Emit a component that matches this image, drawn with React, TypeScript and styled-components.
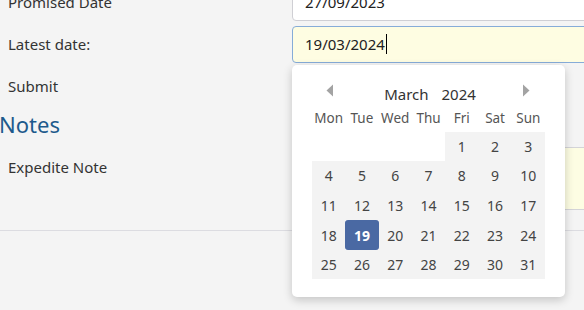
import React from 'react'
import styled, { createGlobalStyle } from 'styled-components'

const GlobalStyle = createGlobalStyle`
  html {
    overflow: hidden;
  }
  body {
    margin: 0;
    padding: 0;
    background: #f4f4f4;
    font-family: "Segoe UI", "Noto Sans", "Open Sans", sans-serif;
    color: #333;
  }
`

const weekDays = ['Mon', 'Tue', 'Wed', 'Thu', 'Fri', 'Sat', 'Sun']

// March 2024 starts on a Friday
const cells: (number | null)[] = [null, null, null, null, ...Array.from({ length: 31 }, (_, i) => i + 1)]

const App = () => {
  return (
    <>
      <GlobalStyle />
      <Page>
        <Row>
          <Label>Promised Date</Label>
          <Field>
            <Input>27/09/2023</Input>
          </Field>
        </Row>
        <Row>
          <Label>Latest date:</Label>
          <Field>
            <Input focused>
              19/03/2024<Caret />
            </Input>
            <Popup>
              <CalHeader>
                <Arrow>
                  <svg width="8" height="13" viewBox="0 0 8 13">
                    <path d="M7 0.5 L0.5 6.5 L7 12.5 Z" fill="#a3a3a3" />
                  </svg>
                </Arrow>
                <MonthTitle>
                  <span>March</span>
                  <span>2024</span>
                </MonthTitle>
                <Arrow>
                  <svg width="8" height="13" viewBox="0 0 8 13">
                    <path d="M1 0.5 L7.5 6.5 L1 12.5 Z" fill="#a3a3a3" />
                  </svg>
                </Arrow>
              </CalHeader>
              <DayGrid>
                {weekDays.map((d) => (
                  <WeekDay key={d}>{d}</WeekDay>
                ))}
                {cells.map((n, i) => (
                  <DayCell key={i} empty={n === null} selected={n === 19}>
                    {n}
                  </DayCell>
                ))}
              </DayGrid>
            </Popup>
          </Field>
        </Row>
        <Row>
          <Label>Submit</Label>
          <Field />
        </Row>
        <SectionTitle>Notes</SectionTitle>
        <Row top>
          <Label top>Expedite Note</Label>
          <Field>
            <NoteArea />
          </Field>
        </Row>
        <Divider />
      </Page>
    </>
  )
}

export default App

const Page = styled.div`
  margin-top: -19px;
  height: 329px;
  display: flex;
  flex-direction: column;
`

const Row = styled.div<{ top?: boolean }>`
  display: grid;
  grid-template-columns: 292px 1fr;
  align-items: ${(p) => (p.top ? 'start' : 'center')};
  min-height: 42px;
`

const Label = styled.div<{ top?: boolean }>`
  padding-left: 8px;
  padding-top: ${(p) => (p.top ? '16px' : '0')};
  font-size: 15px;
  color: #333;
`

const Field = styled.div`
  position: relative;
  min-height: 37px;
`

const Input = styled.div<{ focused?: boolean }>`
  box-sizing: border-box;
  height: 37px;
  margin-right: -8px;
  padding: 0 12px;
  display: flex;
  align-items: center;
  font-size: 15px;
  color: #222;
  background: ${(p) => (p.focused ? '#fefde2' : '#ffffff')};
  border: 1px solid ${(p) => (p.focused ? '#86acd8' : '#cfcfd4')};
  border-radius: 4px;
`

const Caret = styled.span`
  display: inline-block;
  width: 1px;
  height: 20px;
  background: #000;
  margin-left: 1px;
`

const Popup = styled.div`
  position: absolute;
  top: 39px;
  left: 0;
  z-index: 10;
  box-sizing: border-box;
  width: 273px;
  padding: 0 20px 18px;
  background: #fff;
  border-radius: 5px;
  box-shadow: 0 3px 10px rgba(0, 0, 0, 0.2);
`

const CalHeader = styled.div`
  display: flex;
  align-items: center;
  justify-content: space-between;
  height: 22px;
  padding: 18px 15px 0 14px;
`

const Arrow = styled.div`
  display: flex;
  margin-top: -6px;
`

const MonthTitle = styled.div`
  display: flex;
  gap: 13px;
  font-size: 15px;
  line-height: 22px;
  color: #333;
  margin-left: 4px;
`

const DayGrid = styled.div`
  display: grid;
  grid-template-columns: repeat(7, 1fr);
  grid-template-rows: 27px;
  grid-auto-rows: 29.6px;
`

const WeekDay = styled.div`
  display: flex;
  align-items: center;
  justify-content: center;
  font-size: 13.5px;
  color: #555;
`

const DayCell = styled.div<{ empty?: boolean; selected?: boolean }>`
  display: flex;
  align-items: center;
  justify-content: center;
  font-size: 14px;
  color: ${(p) => (p.selected ? '#fff' : '#444')};
  font-weight: ${(p) => (p.selected ? 700 : 400)};
  background: ${(p) => (p.empty ? 'transparent' : '#f3f3f3')};
  ${(p) =>
    p.selected &&
    `
    background: #4a69a3;
    border-radius: 3px;
  `}
`

const SectionTitle = styled.h2`
  margin: 0 0 0 -1px;
  height: 34px;
  font-size: 22px;
  font-weight: 400;
  color: #1d5a8c;
  line-height: 34px;
`

const NoteArea = styled.div`
  margin-top: 6px;
  height: 61px;
  margin-right: -8px;
  background: #fdfde3;
  border: 1px solid #d4d4d8;
  border-radius: 4px;
`

const Divider = styled.hr`
  margin: 20px 0 0;
  border: none;
  border-top: 1px solid #dcdce1;
`
